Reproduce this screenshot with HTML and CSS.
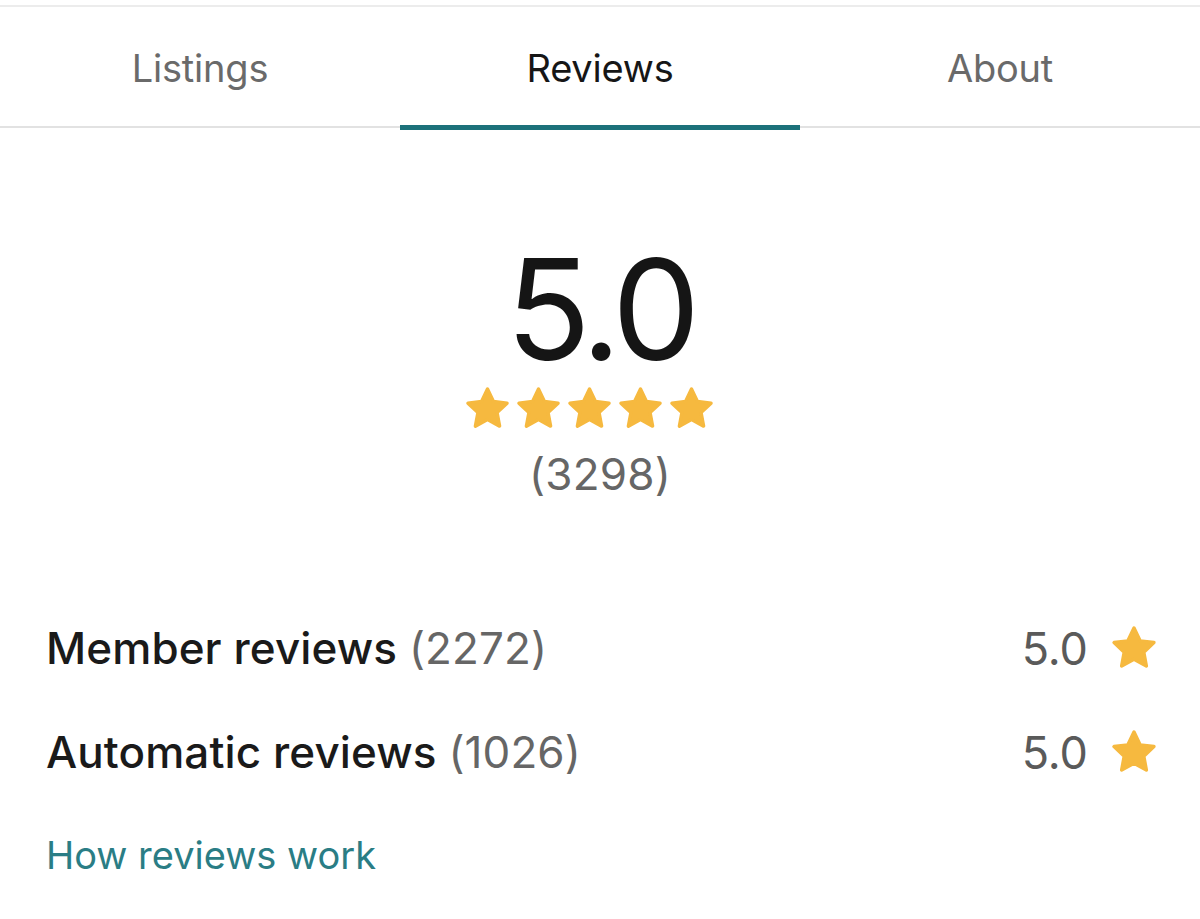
FILE: index.html
```html
<!DOCTYPE html>
<html>
<head>
<meta charset="utf-8">
<link rel="stylesheet" href="styles.css">
</head>
<body>
<div class="topline"></div>
<nav class="tabs">
  <div class="tab">Listings</div>
  <div class="tab active">Reviews</div>
  <div class="tab">About</div>
</nav>
<section class="summary">
  <div class="score">5.0</div>
  <div class="stars">
    <svg viewBox="0 0 24 24"><path d="M12 2.8l2.8 5.9 6.4.8-4.7 4.4 1.2 6.4L12 17.2l-5.7 3.1 1.2-6.4-4.7-4.4 6.4-.8z"/></svg>
    <svg viewBox="0 0 24 24"><path d="M12 2.8l2.8 5.9 6.4.8-4.7 4.4 1.2 6.4L12 17.2l-5.7 3.1 1.2-6.4-4.7-4.4 6.4-.8z"/></svg>
    <svg viewBox="0 0 24 24"><path d="M12 2.8l2.8 5.9 6.4.8-4.7 4.4 1.2 6.4L12 17.2l-5.7 3.1 1.2-6.4-4.7-4.4 6.4-.8z"/></svg>
    <svg viewBox="0 0 24 24"><path d="M12 2.8l2.8 5.9 6.4.8-4.7 4.4 1.2 6.4L12 17.2l-5.7 3.1 1.2-6.4-4.7-4.4 6.4-.8z"/></svg>
    <svg viewBox="0 0 24 24"><path d="M12 2.8l2.8 5.9 6.4.8-4.7 4.4 1.2 6.4L12 17.2l-5.7 3.1 1.2-6.4-4.7-4.4 6.4-.8z"/></svg>
  </div>
  <div class="count">(3298)</div>
</section>
<section class="breakdown">
  <div class="row">
    <div class="label">Member reviews <span class="num">(2272)</span></div>
    <div class="rating">5.0 <svg viewBox="0 0 24 24"><path d="M12 2.8l2.8 5.9 6.4.8-4.7 4.4 1.2 6.4L12 17.2l-5.7 3.1 1.2-6.4-4.7-4.4 6.4-.8z"/></svg></div>
  </div>
  <div class="row">
    <div class="label">Automatic reviews <span class="num">(1026)</span></div>
    <div class="rating">5.0 <svg viewBox="0 0 24 24"><path d="M12 2.8l2.8 5.9 6.4.8-4.7 4.4 1.2 6.4L12 17.2l-5.7 3.1 1.2-6.4-4.7-4.4 6.4-.8z"/></svg></div>
  </div>
  <a class="howlink" href="#">How reviews work</a>
</section>
</body>
</html>
```
FILE: styles.css
```css
html, body {
  margin: 0;
  padding: 0;
  background: #ffffff;
}
body {
  font-family: Inter, "Liberation Sans", sans-serif;
  color: #1b1b1b;
  width: 1200px;
  height: 919px;
  overflow: hidden;
}
.topline {
  height: 5px;
  border-bottom: 2px solid #ececec;
}
.tabs {
  display: flex;
  border-bottom: 2px solid #e2e2e2;
  height: 119px;
}
.tab {
  flex: 1;
  display: flex;
  align-items: center;
  justify-content: center;
  font-size: 38px;
  color: #6a6a6a;
  margin-bottom: -2px;
  border-bottom: 5px solid transparent;
  box-sizing: border-box;
  height: 123px;
  padding-top: 4px;
  letter-spacing: -0.2px;
}
.tab.active {
  color: #161616;
  border-bottom-color: #1c717a;
}
.summary {
  display: flex;
  flex-direction: column;
  align-items: center;
  padding-top: 106px;
}
.score {
  font-size: 140px;
  line-height: 150px;
  color: #151515;
  letter-spacing: -6px;
  font-weight: 400;
}
.stars {
  display: flex;
  margin-top: -1px;
  padding-right: 22px;
}
.stars svg {
  width: 51px;
  height: 51px;
}
svg path {
  fill: #f6b93f;
  stroke: #f6b93f;
  stroke-width: 1.6;
  stroke-linejoin: round;
}
.count {
  font-size: 44px;
  color: #666666;
  margin-top: 13px;
  letter-spacing: 0.2px;
}
.breakdown {
  padding: 95px 40px 0 46px;
}
.row {
  display: flex;
  justify-content: space-between;
  align-items: center;
  height: 104px;
}
.label {
  font-size: 44px;
  font-weight: 500;
  color: #1a1a1a;
  letter-spacing: 0.1px;
}
.num {
  font-weight: 400;
  color: #666666;
}
.rating {
  display: flex;
  align-items: center;
  font-size: 45px;
  color: #5a5a5a;
  gap: 20px;
}
.rating svg {
  width: 52px;
  height: 52px;
}
.howlink {
  display: block;
  font-size: 38px;
  color: #2a7d85;
  text-decoration: none;
  margin-top: 28px;
  letter-spacing: 0px;
}
```
